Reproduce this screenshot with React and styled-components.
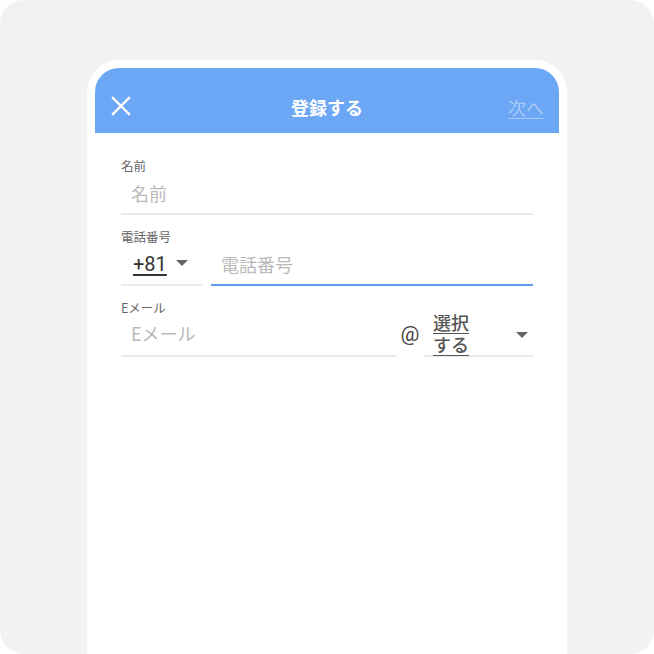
import React from "react";
import styled, { createGlobalStyle } from "styled-components";

const GlobalStyle = createGlobalStyle`
  html, body {
    margin: 0;
    padding: 0;
    background: #ffffff;
  }
  body {
    font-family: "Noto Sans CJK JP", "Noto Sans", "Liberation Sans", sans-serif;
  }
`;

const Page = styled.div`
  width: 654px;
  height: 654px;
  background: #f1f2f4;
  border-radius: 24px;
  overflow: hidden;
  display: flex;
  justify-content: center;
  padding-top: 60px;
  box-sizing: border-box;
`;

const Phone = styled.div`
  width: 480px;
  height: 594px;
  box-sizing: border-box;
  background: #ffffff;
  border-radius: 32px 32px 0 0;
  padding: 8px 8px 0;
  display: flex;
  flex-direction: column;
`;

const Header = styled.header`
  height: 65px;
  flex-shrink: 0;
  background: #6ca7f5;
  border-radius: 24px 24px 0 0;
  display: grid;
  grid-template-columns: 80px 1fr 80px;
  align-items: center;
  padding: 12px 15px 0 15px;
  box-sizing: border-box;
`;

const CloseButton = styled.button`
  border: none;
  background: none;
  padding: 0;
  width: 22px;
  height: 22px;
  display: flex;
  align-items: center;
  justify-content: center;
  cursor: pointer;
  margin-top: -2px;
`;

const Title = styled.h1`
  margin: 0;
  text-align: center;
  color: #ffffff;
  font-size: 18px;
  font-weight: 700;
`;

const NextLink = styled.a`
  justify-self: end;
  color: #a9caf8;
  font-size: 18px;
  text-decoration: underline;
  text-underline-offset: 3px;
`;

const Form = styled.form`
  padding: 24px 26px 0;
  display: flex;
  flex-direction: column;
  gap: 13px;
`;

const Field = styled.div`
  display: flex;
  flex-direction: column;
`;

const Label = styled.label`
  font-size: 12.5px;
  line-height: 18px;
  color: #666666;
`;

const Row = styled.div`
  display: flex;
  align-items: flex-end;
`;

const Underlined = styled.div`
  display: flex;
  align-items: center;
  height: 40px;
  padding-bottom: ${({ $lift }) => ($lift ? `${$lift}px` : "3px")};
  box-sizing: border-box;
  border-bottom: 2px solid ${({ $focused }) => ($focused ? "#5c9cf0" : "#e8eaee")};
  width: ${({ $width }) => ($width ? `${$width}px` : "auto")};
  flex: ${({ $grow }) => ($grow ? "1" : "none")};
  margin-left: ${({ $gap }) => ($gap ? `${$gap}px` : "0")};
`;

const Input = styled.input`
  border: none;
  outline: none;
  background: transparent;
  width: 100%;
  padding: 0 0 0 10px;
  font-family: inherit;
  font-size: 18px;
  color: #333333;
  &::placeholder {
    color: #bababa;
  }
`;

const CodeSelect = styled.div`
  display: flex;
  align-items: center;
  padding-left: 12px;
  gap: 9px;
`;

const CodeText = styled.span`
  font-family: "Roboto", "Liberation Sans", sans-serif;
  font-size: 20px;
  color: #333333;
  text-decoration: underline;
  text-underline-offset: 3px;
`;

const Caret = styled.span`
  width: 0;
  height: 0;
  border-left: 6px solid transparent;
  border-right: 6px solid transparent;
  border-top: 6px solid #666666;
  margin-top: -2px;
  margin-left: ${({ $push }) => ($push ? "auto" : "0")};
  margin-right: ${({ $push }) => ($push ? "5px" : "0")};
`;

const At = styled.span`
  width: 28px;
  text-align: center;
  font-family: "Roboto", "Liberation Sans", sans-serif;
  font-size: 21px;
  color: #444444;
  align-self: center;
  margin-top: -6px;
`;

const DomainSelect = styled.div`
  display: flex;
  align-items: center;
  height: 40px;
  box-sizing: border-box;
  border-bottom: 2px solid #e8eaee;
  width: 109px;
  padding-left: 9px;
`;

const DomainText = styled.span`
  width: 40px;
  font-size: 18px;
  line-height: 22px;
  font-weight: 500;
  color: #555555;
  text-decoration: underline;
  text-underline-offset: 3px;
  margin-top: -6px;
`;

const XIcon = () => (
  <svg width="20" height="20" viewBox="0 0 20 20">
    <path d="M2 2 L18 18 M18 2 L2 18" stroke="#ffffff" strokeWidth="2.4" strokeLinecap="square" />
  </svg>
);

export default function App() {
  return (
    <>
      <GlobalStyle />
      <Page>
        <Phone>
          <Header>
            <CloseButton aria-label="閉じる">
              <XIcon />
            </CloseButton>
            <Title>登録する</Title>
            <NextLink>次へ</NextLink>
          </Header>
          <Form>
            <Field>
              <Label>名前</Label>
              <Underlined>
                <Input placeholder="名前" />
              </Underlined>
            </Field>
            <Field>
              <Label>電話番号</Label>
              <Row>
                <Underlined $width={81}>
                  <CodeSelect>
                    <CodeText>+81</CodeText>
                    <Caret />
                  </CodeSelect>
                </Underlined>
                <Underlined $focused $grow $gap={9}>
                  <Input placeholder="電話番号" />
                </Underlined>
              </Row>
            </Field>
            <Field>
              <Label>Eメール</Label>
              <Row>
                <Underlined $grow $lift={7}>
                  <Input placeholder="Eメール" />
                </Underlined>
                <At>@</At>
                <DomainSelect>
                  <DomainText>選択する</DomainText>
                  <Caret $push />
                </DomainSelect>
              </Row>
            </Field>
          </Form>
        </Phone>
      </Page>
    </>
  );
}
